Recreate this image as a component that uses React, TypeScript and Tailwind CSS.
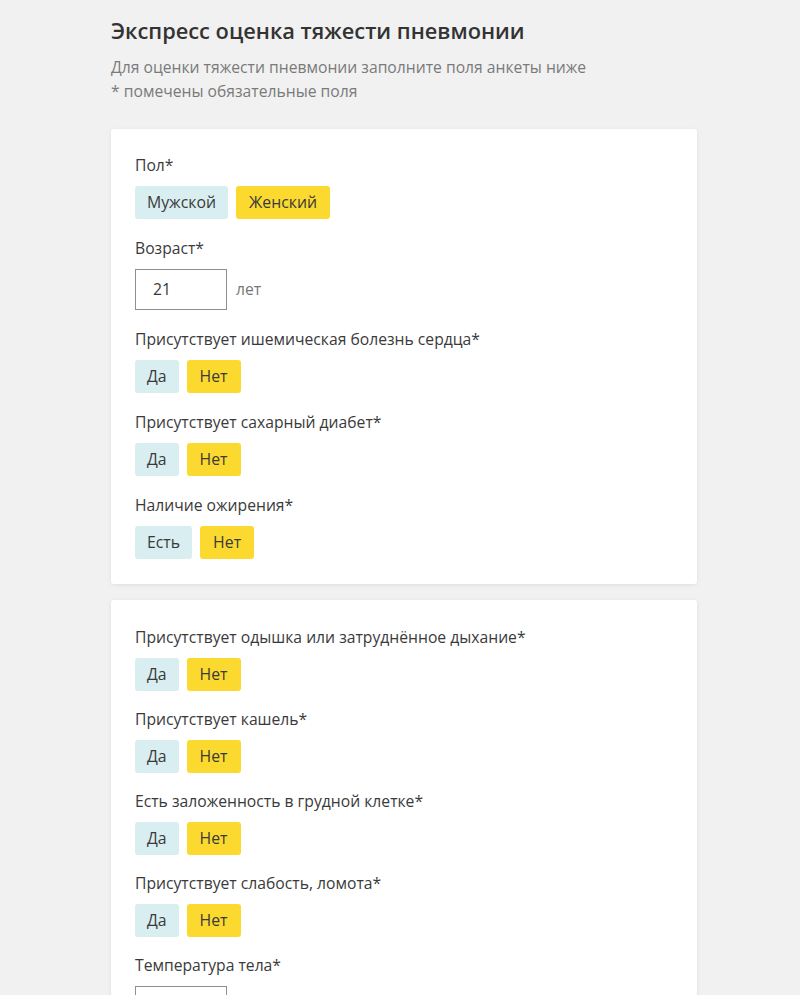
import React from "react";

const font = { fontFamily: '"Open Sans", "Noto Sans", sans-serif' };

function Choice({ a, b }: { a: string; b: string }) {
  return (
    <div className="flex gap-[8px]">
      <div className="h-[33px] px-[12px] flex items-center rounded-[3px] bg-[#d8eef1] text-[#3a3a3a] text-[15.8px]">{a}</div>
      <div className="h-[33px] px-[13px] flex items-center rounded-[3px] bg-[#fcd92e] text-[#3a3a3a] text-[15.8px]">{b}</div>
    </div>
  );
}

function Field({ label, children, mb }: { label: string; children: React.ReactNode; mb: string }) {
  return (
    <div className={mb}>
      <div className="text-[15.7px] leading-[24px] text-[#3a3a3a] mb-[9px]">{label}</div>
      {children}
    </div>
  );
}

function NumInput({ value, unit }: { value: string; unit: string }) {
  return (
    <div className="flex items-center gap-[9px]">
      <div className="w-[92px] h-[41px] border border-[#8f8f8f] bg-white flex items-center pl-[17px] text-[15.7px] text-[#3a3a3a]">{value}</div>
      <div className="text-[15.7px] text-[#777]">{unit}</div>
    </div>
  );
}

export default function App() {
  return (
    <div className="min-h-[995px] bg-[#f1f1f1] overflow-hidden" style={font}>
      <div className="ml-[111px] w-[586px] pt-[15px]">
        <h1 className="text-[21.8px] leading-[32px] font-semibold text-[#333]">Экспресс оценка тяжести пневмонии</h1>
        <div className="mt-[8px] text-[15.7px] leading-[24px] text-[#7a7a7a]">
          <div>Для оценки тяжести пневмонии заполните поля анкеты ниже</div>
          <div>* помечены обязательные поля</div>
        </div>
        <div className="mt-[26px] bg-white rounded-[3px] shadow-[0_1px_4px_rgba(0,0,0,0.08)] px-[24px] pt-[24px] pb-[25px]">
          <Field mb="mb-[17px]" label="Пол*"><Choice a="Мужской" b="Женский" /></Field>
          <Field mb="mb-[17px]" label="Возраст*"><NumInput value="21" unit="лет" /></Field>
          <Field mb="mb-[17px]" label="Присутствует ишемическая болезнь сердца*"><Choice a="Да" b="Нет" /></Field>
          <Field mb="mb-[17px]" label="Присутствует сахарный диабет*"><Choice a="Да" b="Нет" /></Field>
          <Field mb="mb-0" label="Наличие ожирения*"><Choice a="Есть" b="Нет" /></Field>
        </div>
        <div className="mt-[16px] bg-white rounded-[3px] shadow-[0_1px_4px_rgba(0,0,0,0.08)] px-[24px] pt-[25px] pb-[25px]">
          <Field mb="mb-[16px]" label="Присутствует одышка или затруднённое дыхание*"><Choice a="Да" b="Нет" /></Field>
          <Field mb="mb-[16px]" label="Присутствует кашель*"><Choice a="Да" b="Нет" /></Field>
          <Field mb="mb-[16px]" label="Есть заложенность в грудной клетке*"><Choice a="Да" b="Нет" /></Field>
          <Field mb="mb-[16px]" label="Присутствует слабость, ломота*"><Choice a="Да" b="Нет" /></Field>
          <Field mb="mb-0" label="Температура тела*"><NumInput value="" unit="" /></Field>
        </div>
      </div>
    </div>
  );
}
